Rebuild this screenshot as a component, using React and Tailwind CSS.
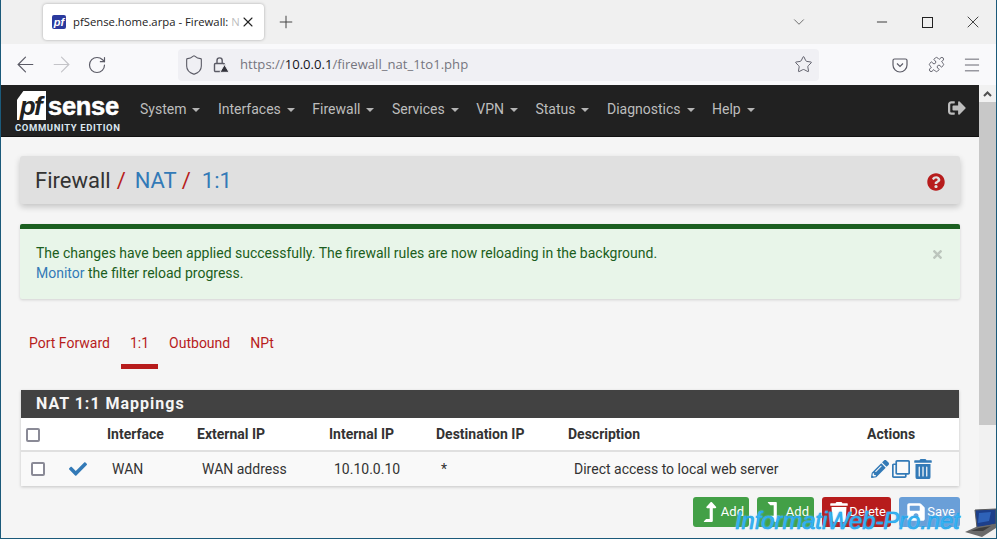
import React from "react";
import { ArrowLeft, ArrowRight, RotateCw, Shield, Star, Puzzle, Menu, ChevronDown, Plus, X, Minus } from "lucide-react";
import { FaPencilAlt, FaRegClone, FaTrashAlt, FaCheck, FaSignOutAlt, FaQuestionCircle, FaSave, FaTimes, FaLevelUpAlt, FaLevelDownAlt, FaTrash } from "react-icons/fa";

const menus = ["System", "Interfaces", "Firewall", "Services", "VPN", "Status", "Diagnostics", "Help"];

function Caret() {
  return <span className="ml-[6px] inline-block w-0 h-0 border-x-[4px] border-x-transparent border-t-[4px] border-t-[#b4b4b4] align-middle" />;
}

function Logo() {
  return (
    <div className="w-[106px] ml-[16px] mt-[6px] shrink-0">
      <div className="flex items-center h-[29px]">
        <div className="w-[29px] h-[29px] bg-white [clip-path:polygon(22%_0,100%_0,100%_100%,0_100%,0_30%)] flex items-center justify-center">
          <span className="font-['Liberation_Sans'] italic font-bold text-[26px] leading-none text-[#212121] tracking-[-1.5px] -ml-[2px]">pf</span>
        </div>
        <span className="font-['Liberation_Sans'] font-bold text-[25.5px] leading-none text-white ml-[2px] tracking-[-0.3px] [-webkit-text-stroke:0.5px_#ffffff] mt-[2px]">sense</span>
      </div>
      <div className="text-[9.5px] font-bold tracking-[0.6px] text-[#dbe7f0] leading-[11px] mt-[2px] whitespace-nowrap -ml-[2px]">COMMUNITY EDITION</div>
    </div>
  );
}

function ActionBtn({ color, icon, label, width }) {
  return (
    <div className={`${color} ${width} h-[30px] rounded-[3px] flex items-center text-white text-[13px] pl-[6px]`}>
      <span className="w-[24px] flex justify-center text-[20px]">{icon}</span>
      <span className="ml-auto pr-[5px]">{label}</span>
    </div>
  );
}

export default function App() {
  return (
    <div className="w-[997px] h-[539px] overflow-hidden relative flex flex-col bg-[#f5f5f5] border-x border-b border-[#1b5a7a] font-['Roboto',sans-serif]">
      {/* title bar */}
      <div className="h-[44px] bg-[#f0f0f0] flex items-center shrink-0 text-[#222]">
        <div className="ml-[42px] w-[221px] h-[36px] bg-white rounded-[4px] shadow-[0_0_3px_rgba(0,0,0,0.3)] flex items-center pl-[9px] font-['Open_Sans',sans-serif]">
          <div className="w-[14px] h-[14px] bg-[#2b3a9e] rounded-[2px] flex items-center justify-center">
            <span className="font-['Liberation_Sans'] italic font-bold text-[11px] text-white leading-none">pf</span>
          </div>
          <span className="ml-[7px] w-[166px] whitespace-nowrap text-[11.3px] text-[#222]">
            pfSense.home.arpa - Firewall: <span className="opacity-30">N</span>
          </span>
          <X size={16} strokeWidth={1.6} className="ml-[1px] shrink-0" />
        </div>
        <Plus size={20} strokeWidth={1.2} className="ml-[12px] text-[#444]" />
        <ChevronDown size={18} strokeWidth={1.1} className="ml-auto text-[#555]" />
        <Minus size={16} strokeWidth={1.3} className="ml-[66px]" />
        <div className="ml-[32px] w-[11px] h-[11px] border border-[#222]" />
        <X size={20} strokeWidth={1} className="ml-[30px] mr-[13px]" />
      </div>
      {/* toolbar */}
      <div className="h-[41px] bg-[#f9f9fb] flex items-center shrink-0 text-[#5b5b66]">
        <ArrowLeft size={25} strokeWidth={1.1} className="ml-[12px]" />
        <ArrowRight size={25} strokeWidth={1.1} className="ml-[11px] text-[#c4c4c8]" />
        <RotateCw size={20} strokeWidth={1.4} className="ml-[13px]" />
        <div className="ml-[71px] w-[641px] h-[32px] bg-[#f0f0f4] rounded-[4px] flex items-center pl-[5px]">
          <Shield size={22} strokeWidth={1.2} />
          <svg width="17" height="17" viewBox="0 0 17 17" fill="none" stroke="#5b5b66" strokeWidth="1.4" className="ml-[8px]">
            <rect x="1.5" y="7.5" width="10" height="8" rx="1" />
            <path d="M4 7.5V4.5a2.6 2.6 0 0 1 5.2 0v3" />
            <path d="M11.5 8.5l4.6 7.8H6.9z" fill="#33333b" stroke="#f0f0f4" strokeWidth="1" />
          </svg>
          <span className="ml-[10px] mt-[1px] text-[13.1px] text-[#75757e] font-['Open_Sans',sans-serif] whitespace-nowrap">
            https://<span className="text-[#15141a]">10.0.0.1</span>/firewall_nat_1to1.php
          </span>
          <Star size={19} strokeWidth={1.2} className="ml-auto mr-[6px]" />
        </div>
        <svg width="16" height="16" viewBox="0 0 16 16" fill="none" stroke="#5b5b66" strokeWidth="1.2" className="ml-[73px]">
          <path d="M2.5 2h11A1.5 1.5 0 0 1 15 3.5V8a7 7 0 0 1-14 0V3.5A1.5 1.5 0 0 1 2.5 2z" />
          <path d="M5 6.5l3 3 3-3" />
        </svg>
        <Puzzle size={17} strokeWidth={1.3} className="ml-[20px]" />
        <Menu size={20} strokeWidth={1.1} className="ml-[17px]" />
      </div>
      {/* page and scrollbar */}
      <div className="flex-1 flex min-h-0">
        <div className="flex-1 min-w-0 overflow-hidden">
          <nav className="h-[52px] bg-[#212121] flex border-b border-[#111]">
            <Logo />
            <div className="flex ml-[17px] mt-[15px] gap-[17.5px] text-[14px] text-[#bdbdbd] h-[18px] items-center whitespace-nowrap">
              {menus.map((m) => (
                <span key={m}>{m}<Caret /></span>
              ))}
            </div>
            <FaSignOutAlt className="ml-auto mr-[13px] mt-[14px] text-[#bdbdbd] text-[18px]" />
          </nav>
          <div className="px-[19px] pt-[19px]">
            <div className="h-[48px] bg-[#e0e0e0] rounded-[3px] shadow-[0_3px_6px_rgba(0,0,0,0.2)] flex items-center px-[15px] text-[22px] text-[#333]">
              <span>Firewall</span>
              <span className="text-[#b71c1c] ml-[6px]">/</span>
              <span className="text-[#337ab7] ml-[9px]">NAT</span>
              <span className="text-[#b71c1c] ml-[5px]">/</span>
              <span className="text-[#337ab7] ml-[11px]">1:1</span>
              <FaQuestionCircle className="ml-auto mt-[3px] text-[#b71c1c] text-[18px]" />
            </div>
            <div className="mt-[20px] h-[75px] bg-[#e8f5e9] border-t-[5px] border-[#1b5e20] rounded-[2px] shadow-[0_1px_3px_rgba(0,0,0,0.15)] flex px-[16px] pt-[14px] text-[14px] leading-[20px] text-[#1b5e20]">
              <p className="flex-1">
                The changes have been applied successfully. The firewall rules are now reloading in the background.
                <br />
                <span className="text-[#337ab7]">Monitor</span> the filter reload progress.
              </p>
              <FaTimes className="text-[#bcc5bd] text-[13px] mt-[5px]" />
            </div>
            <div className="mt-[24px] flex text-[14px] leading-[20px] text-[#b71c1c]">
              <div className="px-[9px] pt-[10px] pb-[11px]">Port Forward</div>
              <div className="ml-[2px] px-[9px] pt-[10px] pb-[11px] border-b-[5px] border-[#b71c1c]">1:1</div>
              <div className="ml-[2px] px-[9px] pt-[10px]">Outbound</div>
              <div className="ml-[2px] px-[9px] pt-[10px]">NPt</div>
            </div>
            <div className="mt-[21px] mx-[1px] shadow-[0_1px_3px_rgba(0,0,0,0.2)] bg-white">
              <div className="h-[28px] bg-[#424242] flex items-center pl-[15px] text-[16px] font-bold tracking-[1px] text-[#f5f5f5]">NAT 1:1 Mappings</div>
              <div className="h-[34px] pt-[1px] bg-white border-b-[2px] border-[#e0e0e0] flex items-center text-[14px] font-bold text-[#333] whitespace-nowrap">
                <div className="w-[86px] pl-[5px]"><div className="w-[14px] h-[14px] border-2 border-[#8a8a96] rounded-[2px] bg-white" /></div>
                <div className="w-[90px]">Interface</div>
                <div className="w-[132px]">External IP</div>
                <div className="w-[107px]">Internal IP</div>
                <div className="w-[132px]">Destination IP</div>
                <div className="flex-1">Description</div>
                <div className="w-[92px]">Actions</div>
              </div>
              <div className="h-[34px] bg-[#f9f9f9] flex items-center text-[14px] text-[#333] whitespace-nowrap">
                <div className="w-[48px] pl-[10px]"><div className="w-[14px] h-[14px] border-2 border-[#8a8a96] rounded-[2px] bg-white" /></div>
                <div className="w-[43px]"><FaCheck className="text-[#337ab7] text-[18px]" /></div>
                <div className="w-[90px]">WAN</div>
                <div className="w-[132px]">WAN address</div>
                <div className="w-[107px]">10.10.0.10</div>
                <div className="w-[133px]">*</div>
                <div className="flex-1">Direct access to local web server</div>
                <div className="w-[88px] flex items-center text-[#337ab7] text-[18px] gap-[3px]">
                  <FaPencilAlt /><FaRegClone /><FaTrashAlt className="text-[20px]" />
                </div>
              </div>
            </div>
            <div className="mt-[11px] flex justify-end gap-[8px]">
              <ActionBtn color="bg-[#43a047]" width="w-[56px]" icon={<FaLevelUpAlt />} label="Add" />
              <ActionBtn color="bg-[#43a047]" width="w-[57px]" icon={<FaLevelDownAlt />} label="Add" />
              <ActionBtn color="bg-[#b71c1c]" width="w-[69px]" icon={<FaTrash />} label="Delete" />
              <ActionBtn color="bg-[#6a9fd8]" width="w-[61px]" icon={<FaSave />} label="Save" />
            </div>
          </div>
        </div>
        <div className="w-[17px] shrink-0 bg-[#f1f1f1] flex flex-col">
          <div className="h-[17px] flex items-center justify-center">
            <svg width="9" height="6" viewBox="0 0 9 6"><path d="M1 5l3.5-3.5L8 5" fill="none" stroke="#505050" strokeWidth="2" /></svg>
          </div>
          <div className="h-[323px] bg-[#c8c8c8]" />
        </div>
      </div>
      {/* watermark */}
      <div className="absolute left-[734px] bottom-[3px] text-[23.7px] leading-[28px] italic font-['Liberation_Sans'] text-[#38b6f5] [-webkit-text-stroke:0.6px_#1f9fe6] [text-shadow:0_0_2px_#7fd4ff] whitespace-nowrap">InformatiWeb-Pro.net</div>
      <svg width="32" height="30" viewBox="0 0 32 30" className="absolute right-[-1px] bottom-[0px]">
        <path d="M10 2l21-1v15l-19 4z" fill="#1d3f8a" stroke="#5c5c5c" />
        <path d="M14 5l12-1-2 9-11 2z" fill="#2e62b8" />
        <path d="M0 24l11-5 20-3v4l-14 9z" fill="#6a6a6a" />
        <path d="M6 23l8-3 12-2-8 5z" fill="#3d3d3d" />
      </svg>
    </div>
  );
}
